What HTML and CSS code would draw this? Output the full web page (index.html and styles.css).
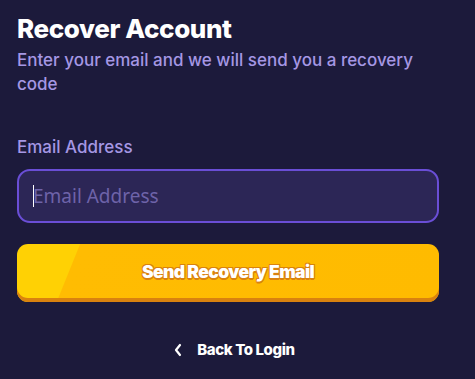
FILE: index.html
```html
<!DOCTYPE html>
<html lang="en">
    <head>
        <meta charset="UTF-8">
        <meta name="viewport" content="width=device-width, initial-scale=1.0">
        <title>Recover Account</title>
        <link rel="stylesheet" href="styles.css">
    </head>

    <body>
        <div class="container">
            <h1 class="title">Recover Account</h1>
            <p class="subtitle">Enter your email and we will send you a recovery code</p>

            <form class="form">
                <label class="label" for="email">Email Address</label>
                <div class="input-box">
                    <span class="caret"></span>
                    <input id="email" class="input" type="email" placeholder="Email Address">
                </div>
                <button type="button" class="send-btn">Send Recovery Email</button>
            </form>

            <a class="back-link" href="#">
                <svg class="chevron" width="10" height="14" viewBox="0 0 10 14">
                    <path d="M7 2 L3 7 L7 12" fill="none" stroke="#fff" stroke-width="2.2" stroke-linecap="round" stroke-linejoin="round"/>
                </svg>
                <span>Back To Login</span>
            </a>
        </div>
    </body>
</html>
```

FILE: styles.css
```css
body{
    margin: 0;
    background-color: #1c1a3b;
    font-family: "Inter", "Noto Sans", sans-serif;
}
.container{
    padding: 12px 36px 0 17px;
}
.title{
    margin: 0;
    color: #fff;
    font-size: 26px;
    font-weight: 800;
    letter-spacing: -0.4px;
    line-height: 34px;
}
.subtitle{
    margin: 2px 0 0 0;
    color: #a597e4;
    font-size: 17px;
    font-weight: 500;
    line-height: 24px;
}
.form{
    display: flex;
    flex-direction: column;
    margin-top: 40px;
}
.label{
    color: #a597e4;
    font-size: 17px;
    font-weight: 500;
    line-height: 22px;
}
.input-box{
    position: relative;
    margin-top: 11px;
    height: 50px;
    border: 2px solid #6a4ed6;
    border-radius: 13px;
    background-color: #2c2656;
    display: flex;
    align-items: center;
}
.caret{
    position: absolute;
    left: 14px;
    top: 14px;
    width: 1px;
    height: 22px;
    background-color: #fff;
}
.input{
    flex: 1;
    height: 100%;
    border: none;
    outline: none;
    background: transparent;
    padding: 0 0 0 14px;
    font-family: "Noto Sans", sans-serif;
    font-size: 19px;
    color: #fff;
}
.input::placeholder{
    color: #6e63a9;
}
.send-btn{
    margin-top: 21px;
    height: 58px;
    border: none;
    border-radius: 11px;
    padding: 0 0 4px 0;
    background: linear-gradient(112deg, #ffd104 0, #ffd104 58px, #ffbc02 59px, #ffbb00 100%);
    box-shadow: inset 0 -4px 0 #d9820f;
    color: #fff;
    font-family: "Inter", sans-serif;
    font-size: 17.5px;
    font-weight: 900;
    letter-spacing: -0.6px;
    text-shadow: 1px 1px 0 #d9820f, -1px 1px 0 #d9820f, 1px -1px 0 #d9820f, -1px -1px 0 #d9820f, 0 2px 0 #d9820f;
    cursor: pointer;
}
.back-link{
    display: flex;
    align-items: center;
    justify-content: center;
    gap: 14px;
    margin-top: 38px;
    margin-right: -12px;
    color: #fff;
    text-decoration: none;
    font-size: 15px;
    font-weight: 800;
    letter-spacing: -0.4px;
}
```
